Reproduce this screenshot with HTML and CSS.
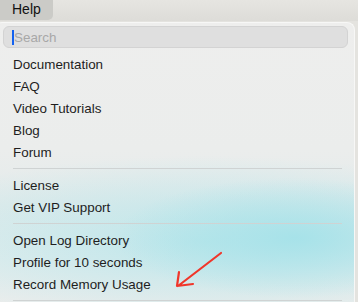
FILE: index.html
```html
<!DOCTYPE html>
<html>
<head>
<meta charset="utf-8">
<link rel="stylesheet" href="styles.css">
</head>
<body>
<div class="menubar">
  <div class="tab">Help</div>
</div>
<div class="menu">
  <div class="search"><span class="caret"></span><span class="placeholder">Search</span></div>
  <div class="group first">
    <div class="item">Documentation</div>
    <div class="item">FAQ</div>
    <div class="item">Video Tutorials</div>
    <div class="item">Blog</div>
    <div class="item">Forum</div>
  </div>
  <div class="sep"></div>
  <div class="group">
    <div class="item">License</div>
    <div class="item">Get VIP Support</div>
  </div>
  <div class="sep"></div>
  <div class="group">
    <div class="item">Open Log Directory</div>
    <div class="item">Profile for 10 seconds</div>
    <div class="item">Record Memory Usage</div>
  </div>
  <div class="sep"></div>
  <svg class="arrow" width="60" height="50" viewBox="0 0 60 50">
    <path d="M50 3 L7 36 M8 22 L6 36 L22 34" fill="none" stroke="#f0362a" stroke-width="2.2" stroke-linecap="round" stroke-linejoin="round"/>
  </svg>
</div>
</body>
</html>
```
FILE: styles.css
```css
html, body {
  margin: 0;
  padding: 0;
  overflow: hidden;
}
body {
  width: 358px;
  height: 302px;
  background: #e4e3df;
  font-family: "Liberation Sans", Arial, sans-serif;
  font-size: 13.4px;
  color: #1e1e1e;
  position: relative;
}
.menubar {
  height: 21px;
  background: linear-gradient(#e6e5e1, #dddcd8);
  display: flex;
}
.tab {
  width: 53px;
  height: 20px;
  box-sizing: border-box;
  padding-left: 12px;
  line-height: 19px;
  background: #cbcbc7;
  border-bottom-right-radius: 5px;
  color: #111;
  font-size: 14px;
}
.menu {
  position: relative;
  margin-left: -6px;
  width: 361px;
  height: 281px;
  margin-top: 1px;
  box-sizing: border-box;
  border: 1px solid #f7f7f6;
  border-bottom: none;
  border-radius: 8px 8px 0 0;
  padding: 3px 6px 0 8px;
  background:
    radial-gradient(ellipse 180px 60px at 300px 215px, rgba(165,226,233,0.95), rgba(165,226,233,0) 100%),
    radial-gradient(ellipse 340px 85px at 210px 218px, rgba(172,228,234,0.7), rgba(172,228,234,0) 100%),
    linear-gradient(#eeeeed 0%, #ebedec 45%, #e3ebeb 65%, #e6eded 85%, #ecedec 100%);
  box-shadow: -1px 0 0 #d8d8d4;
}
.search {
  height: 20px;
  border: 1px solid #d3d3d3;
  border-radius: 6px;
  background: #dfdfdf;
  display: flex;
  align-items: center;
  padding-left: 8px;
}
.caret {
  width: 2px;
  height: 15px;
  background: #1462f0;
}
.placeholder {
  color: #a8a8a8;
  font-size: 13.4px;
}
.group {
  padding-left: 10px;
  padding-top: 1px;
}
.group.first {
  padding-top: 6px;
}
.item {
  height: 22px;
  line-height: 22px;
}
.sep {
  height: 1px;
  background: #cfd3d3;
  margin: 4px 6px 5px 10px;
}
.arrow {
  position: absolute;
  left: 176px;
  top: 227px;
}
```
